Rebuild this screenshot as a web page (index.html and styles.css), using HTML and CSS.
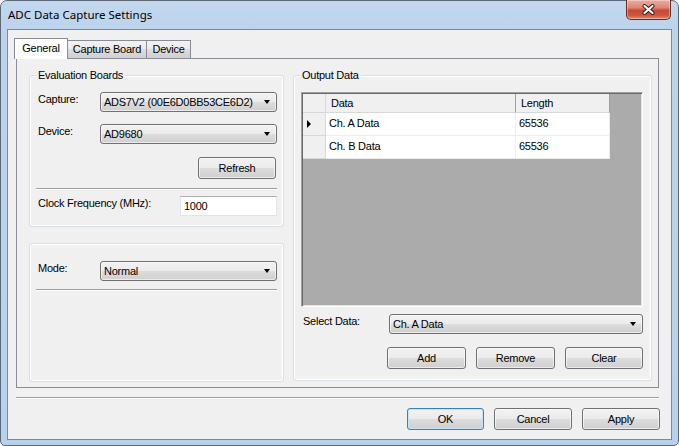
FILE: index.html
```html
<!DOCTYPE html>
<html lang="en">
<head>
    <meta charset="UTF-8">
    <title>ADC Data Capture Settings</title>
    <link rel="stylesheet" href="styles.css">
</head>
<body>

    <div class="window">
        <!-- Barre de titre -->
        <div class="titlebar">
            <span class="title">ADC Data Capture Settings</span>
            <button class="close-btn" aria-label="Close">
                <svg width="13" height="11" viewBox="0 0 13 11">
                    <path d="M2.5 2 L10.5 9 M10.5 2 L2.5 9" stroke="#3b1a14" stroke-width="4" stroke-linecap="round"/>
                    <path d="M2.5 2 L10.5 9 M10.5 2 L2.5 9" stroke="#fff" stroke-width="2.2" stroke-linecap="round"/>
                </svg>
            </button>
        </div>

        <div class="client">
            <div class="tabs">
                <div class="tab-strip">
                    <div class="tab tab-general active">General</div>
                    <div class="tab tab-board">Capture Board</div>
                    <div class="tab tab-device">Device</div>
                </div>

                <div class="tab-page">
                    <div class="col-left">
                        <div class="group group-boards">
                            <div class="group-title">Evaluation Boards</div>
                            <div class="field-row row-capture">
                                <label class="field-label">Capture:</label>
                                <div class="combo">ADS7V2 (00E6D0BB53CE6D2)<span class="arrow"></span></div>
                            </div>
                            <div class="field-row row-device">
                                <label class="field-label">Device:</label>
                                <div class="combo">AD9680<span class="arrow"></span></div>
                            </div>
                            <div class="refresh-row">
                                <button class="btn btn-refresh">Refresh</button>
                            </div>
                            <div class="sep sep-boards"></div>
                            <div class="field-row row-clock">
                                <label class="field-label clock-label">Clock Frequency (MHz):</label>
                                <div class="textbox">1000</div>
                            </div>
                        </div>

                        <div class="group group-mode">
                            <div class="field-row row-mode">
                                <label class="field-label">Mode:</label>
                                <div class="combo">Normal<span class="arrow"></span></div>
                            </div>
                            <div class="sep sep-mode"></div>
                        </div>
                    </div>

                    <div class="group group-output">
                        <div class="group-title">Output Data</div>

                        <div class="grid">
                            <div class="grid-table">
                                <div class="hdr corner"></div>
                                <div class="hdr">Data</div>
                                <div class="hdr">Length</div>

                                <div class="row-hdr"><span class="row-arrow"></span></div>
                                <div class="cell">Ch. A Data</div>
                                <div class="cell">65536</div>

                                <div class="row-hdr"></div>
                                <div class="cell">Ch. B Data</div>
                                <div class="cell">65536</div>
                            </div>
                        </div>

                        <div class="field-row row-select">
                            <label class="field-label select-label">Select Data:</label>
                            <div class="combo">Ch. A Data<span class="arrow"></span></div>
                        </div>

                        <div class="output-buttons">
                            <button class="btn btn-add">Add</button>
                            <button class="btn btn-remove">Remove</button>
                            <button class="btn btn-clear">Clear</button>
                        </div>
                    </div>
                </div>
            </div>

            <div class="dialog-sep"></div>

            <div class="dialog-buttons">
                <button class="btn btn-ok">OK</button>
                <button class="btn btn-cancel">Cancel</button>
                <button class="btn btn-apply">Apply</button>
            </div>
        </div>
    </div>

</body>
</html>
```

FILE: styles.css
```css
body {
    margin: 0;
    background-color: #fff;
    font-family: "Liberation Sans", Arial, sans-serif;
    font-size: 11px;
    letter-spacing: -0.25px;
    color: #000;
}

* {
    box-sizing: border-box;
}

.window {
    width: 679px;
    height: 446px;
    border: 1px solid #5a6878;
    border-radius: 7px 7px 5px 5px;
    background: linear-gradient(to bottom, #c3d8ef 0, #bcd3eb 28px, #b9d1ea 100%);
    padding: 0 6px 5px 6px;
    display: flex;
    flex-direction: column;
}

/* Barre de titre */
.titlebar {
    height: 28px;
    display: flex;
    justify-content: space-between;
    align-items: flex-start;
}

.title {
    font-family: "Noto Sans", sans-serif;
    font-size: 11.5px;
    letter-spacing: 0;
    line-height: 27px;
    padding-left: 1px;
}

.close-btn {
    width: 45px;
    height: 20px;
    margin: -1px 1px 0 0;
    padding: 0;
    border: 1px solid #6b2b20;
    border-top: none;
    border-radius: 0 0 5px 5px;
    background: linear-gradient(to bottom, #e9aea2 0%, #dc8676 40%, #c74a34 55%, #cc5540 80%, #de8a70 100%);
    box-shadow: inset 0 0 0 1px rgba(255, 255, 255, 0.35);
    display: flex;
    align-items: center;
    justify-content: center;
}

.client {
    flex: 1;
    border: 1px solid #7b8a9a;
    background-color: #f0f0f0;
    display: flex;
    flex-direction: column;
}

/* Onglets */
.tabs {
    margin: 8px 12px 0 8px;
}

.tab-strip {
    height: 20px;
    display: flex;
    align-items: flex-end;
    position: relative;
    z-index: 1;
}

.tab {
    height: 18px;
    border: 1px solid #898c95;
    border-bottom: none;
    background: linear-gradient(to bottom, #f2f2f2 0%, #ebebeb 50%, #dddddd 50%, #cfcfcf 100%);
    text-align: center;
    line-height: 17px;
}

.tab.active {
    height: 21px;
    margin-bottom: -1px;
    background: #fff;
    line-height: 18px;
    position: relative;
    z-index: 2;
}

.tab-general {
    width: 54px;
    margin-left: -2px;
    margin-right: -1px;
}

.tab-board {
    width: 80px;
}

.tab-device {
    width: 45px;
    margin-left: -1px;
}

.tab-page {
    height: 330px;
    border: 1px solid #898c95;
    display: flex;
    gap: 9px;
    padding: 16px 6px 0 12px;
}

.col-left {
    width: 255px;
    display: flex;
    flex-direction: column;
    gap: 16px;
}

/* Cadres de groupe */
.group {
    border: 1px solid #d5dfe5;
    border-radius: 3px;
    box-shadow: inset 0 0 0 1px #fff;
    display: flex;
    flex-direction: column;
    padding: 0 6px;
}

.group-boards {
    height: 152px;
}

.group-mode {
    height: 139px;
}

.group-output {
    width: 359px;
    height: 306px;
    padding: 0 8px 0 7px;
}

.group-title {
    align-self: flex-start;
    margin-top: -7px;
    padding: 0 2px;
    line-height: 13px;
    background-color: #f0f0f0;
}

.group-output .group-title {
    margin-left: -1px;
}

.field-row {
    display: flex;
}

.field-label {
    width: 64px;
    padding: 1px 0 0 2px;
    line-height: 13px;
}

.row-capture {
    margin-top: 10px;
}

.row-device {
    margin-top: 12px;
}

.row-clock {
    margin-top: 6px;
}

.clock-label {
    flex: 1;
}

.row-mode {
    margin-top: 17px;
}

.row-select {
    margin-top: 7px;
}

.select-label {
    width: 88px;
}

.refresh-row {
    display: flex;
    justify-content: flex-end;
    margin-top: 13px;
}

.sep {
    border-top: 1px solid #a0a0a0;
    border-bottom: 1px solid #fff;
}

.sep-boards {
    margin-top: 9px;
}

.sep-mode {
    margin-top: 8px;
}

/* Listes déroulantes et boutons */
.combo {
    flex: 1;
    height: 20px;
    border: 1px solid #707070;
    border-radius: 3px;
    background: linear-gradient(to bottom, #f2f2f2 0%, #ebebeb 50%, #dddddd 50%, #cfcfcf 100%);
    box-shadow: inset 0 0 0 1px rgba(255, 255, 255, 0.6);
    padding-left: 3px;
    line-height: 18px;
    position: relative;
}

.arrow {
    position: absolute;
    right: 6px;
    top: 7px;
    border-top: 4px solid #000;
    border-left: 3.5px solid transparent;
    border-right: 3.5px solid transparent;
}

.btn {
    height: 22px;
    padding: 0;
    border: 1px solid #707070;
    border-radius: 3px;
    background: linear-gradient(to bottom, #f2f2f2 0%, #ebebeb 50%, #dddddd 50%, #cfcfcf 100%);
    box-shadow: inset 0 0 0 1px rgba(255, 255, 255, 0.6);
    font-family: "Liberation Sans", Arial, sans-serif;
    font-size: 11px;
    letter-spacing: -0.25px;
    color: #000;
}

.btn-refresh {
    width: 78px;
    margin-right: 1px;
}

.textbox {
    width: 97px;
    height: 20px;
    border: 1px solid #e2e3ea;
    border-top-color: #abadb3;
    background-color: #fff;
    padding-left: 3px;
    line-height: 18px;
}

/* Grille des données */
.grid {
    height: 215px;
    margin-top: 10px;
    border-top: 1px solid #a0a0a0;
    border-left: 1px solid #a0a0a0;
    border-right: 1px solid #fff;
    border-bottom: 1px solid #fff;
    box-shadow: inset 1px 1px 0 #696969, inset -1px -1px 0 #e3e3e3;
    background-color: #ababab;
    padding: 1px 0 0 1px;
}

.grid-table {
    display: grid;
    grid-template-columns: 23px 190px 94px;
    grid-template-rows: 19px 23px 23px;
}

.hdr {
    background-color: #f0f0f0;
    border-right: 1px solid #a0a0a0;
    border-bottom: 1px solid #d8d8d8;
    padding-left: 5px;
    line-height: 18px;
}

.hdr.corner {
    border-right-color: #d8d8d8;
}

.row-hdr {
    background-color: #f0f0f0;
    border-right: 1px solid #d8d8d8;
    border-bottom: 1px solid #d8d8d8;
    padding: 7px 0 0 4px;
}

.row-arrow {
    display: block;
    width: 0;
    border-left: 4px solid #000;
    border-top: 4px solid transparent;
    border-bottom: 4px solid transparent;
}

.cell {
    background-color: #fff;
    border-right: 1px solid #ececec;
    border-bottom: 1px solid #ececec;
    padding-left: 3px;
    line-height: 21px;
}

.output-buttons {
    display: flex;
    justify-content: flex-end;
    gap: 10px;
    margin-top: 13px;
}

.btn-add, .btn-remove {
    width: 79px;
}

.btn-clear {
    width: 78px;
}

/* Bas de la boîte de dialogue */
.dialog-sep {
    margin: 9px 12px 0 8px;
    border-top: 1px solid #a0a0a0;
    border-bottom: 1px solid #fff;
}

.dialog-buttons {
    display: flex;
    justify-content: flex-end;
    gap: 10px;
    margin: 9px 11px 0 0;
}

.btn-ok {
    width: 77px;
    border-color: #3c7fb1;
    box-shadow: inset 0 0 0 1px #c6e4f7;
}

.btn-cancel, .btn-apply {
    width: 78px;
}
```
